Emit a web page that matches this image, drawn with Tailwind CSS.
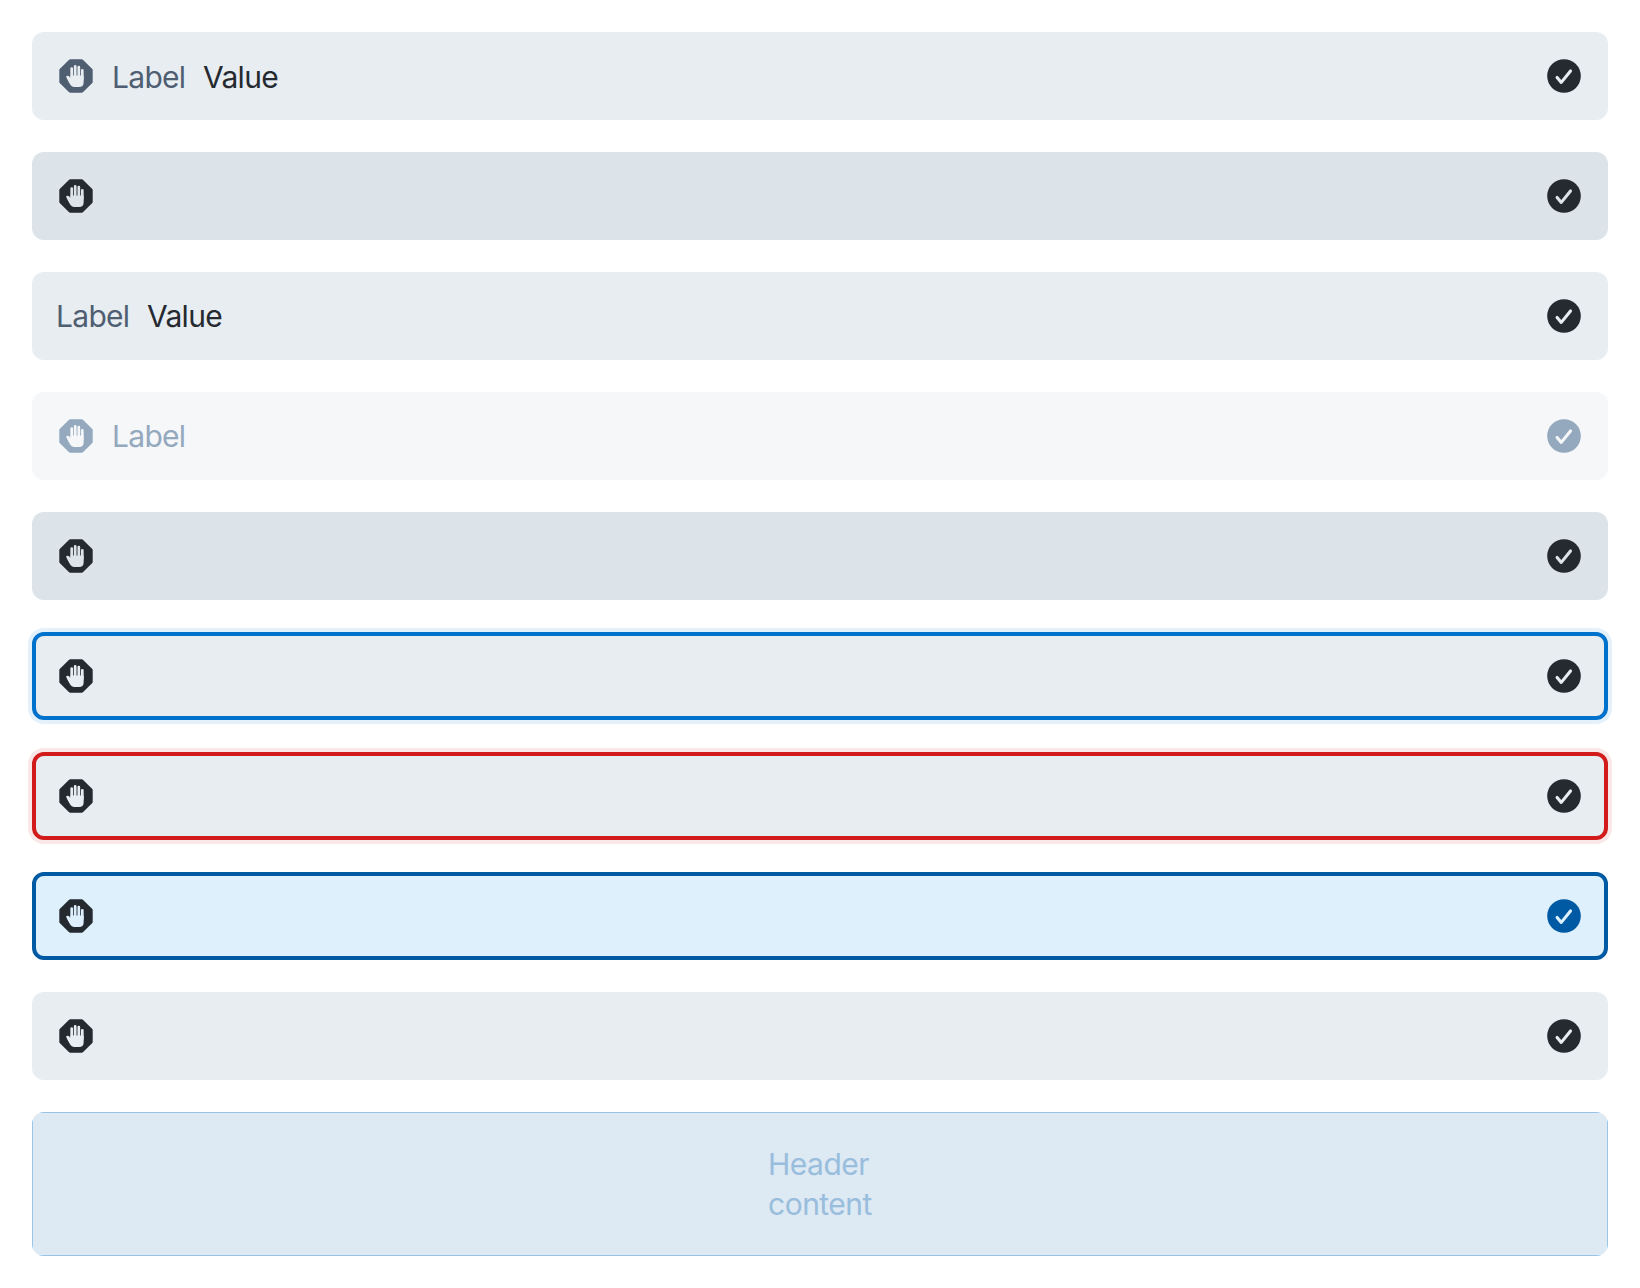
<!DOCTYPE html>
<html lang="en">
<head>
<meta charset="utf-8">
<title>Input states</title>
<script src="https://cdn.jsdelivr.net/npm/@tailwindcss/browser@4"></script>
</head>
<body class="bg-white font-['Inter',sans-serif] text-[30px] leading-10">
<svg class="hidden">
  <symbol id="hand" viewBox="0 0 34 34">
    <path fill="currentColor" d="M11.1 .3h11.8q.6 0 1 .4l9.4 9.4q.4 .4 .4 1v11.8q0 .6-.4 1l-9.4 9.4q-.4 .4-1 .4H11.1q-.6 0-1-.4L.7 23.9q-.4-.4-.4-1V11.1q0-.6 .4-1L10.100 .7q.4-.4 1-.4z"/>
    <g class="fill-(--bg) stroke-(--bg)" stroke-linecap="round">
      <path stroke-width="2.7" fill="none" d="M12.700 9.6V19M16.200 7.400V18M19.800 8V18M23.300 11.300V20"/>
      <path stroke="none" d="M7.200 18c0-1.700 2.300-1.500 3.100-.4l1.100 1.600V16.500H24.650V23.500c0 3.200-1.700 4.600-4.700 4.600h-3.500c-2.400 0-4-.7-5.200-2.600C9.500 22.800 8.200 20.200 7.200 18z"/>
    </g>
  </symbol>
  <symbol id="check" viewBox="0 0 34 34">
    <circle cx="17" cy="17" r="16.800" fill="currentColor"/>
    <path class="stroke-(--bg)" d="M10.100 18.400L14.300 23.400L23.500 12" fill="none" stroke-width="3.100" stroke-linecap="round" stroke-linejoin="round"/>
  </symbol>
</svg>
<main class="flex flex-col gap-8 p-8">
  <div class="flex h-22 items-center rounded-xl bg-[#e8edf1] px-[27px] pb-px text-[#252a31] [--bg:#e8edf1]">
    <svg class="size-[34px] text-[#4f5e71]"><use href="#hand"/></svg>
    <span class="ml-[19px] mt-[3px] w-[91px] tracking-[-0.7px] text-[#4f5e71]">Label</span>
    <span class="mt-[3px] tracking-[-0.7px]">Value</span>
    <svg class="ml-auto size-[34px]"><use href="#check"/></svg>
  </div>
  <div class="flex h-22 items-center justify-between rounded-xl bg-[#dce3e9] px-[27px] pb-px text-[#252a31] [--bg:#dce3e9]">
    <svg class="size-[34px]"><use href="#hand"/></svg>
    <svg class="size-[34px]"><use href="#check"/></svg>
  </div>
  <div class="flex h-22 items-center rounded-xl bg-[#e8edf1] pr-[27px] pl-6 pb-px text-[#252a31] [--bg:#e8edf1]">
    <span class="mt-px w-[91px] tracking-[-0.7px] text-[#4f5e71]">Label</span>
    <span class="mt-px tracking-[-0.7px]">Value</span>
    <svg class="ml-auto size-[34px]"><use href="#check"/></svg>
  </div>
  <div class="flex h-22 items-center rounded-xl bg-[#f5f7f9] px-[27px] pb-px text-[#94a8be] [--bg:#f5f7f9]">
    <svg class="size-[34px]"><use href="#hand"/></svg>
    <span class="ml-[19px] mt-px tracking-[-0.7px]">Label</span>
    <svg class="ml-auto size-[34px]"><use href="#check"/></svg>
  </div>
  <div class="flex h-22 items-center justify-between rounded-xl bg-[#dce3e9] px-[27px] pb-px text-[#252a31] [--bg:#dce3e9]">
    <svg class="size-[34px]"><use href="#hand"/></svg>
    <svg class="size-[34px]"><use href="#check"/></svg>
  </div>
  <div class="flex h-22 items-center justify-between rounded-xl border-4 border-[#0172cb] bg-[#e8edf1] px-[23px] pb-px text-[#252a31] ring-4 ring-[#0172cb]/10 [--bg:#e8edf1]">
    <svg class="size-[34px]"><use href="#hand"/></svg>
    <svg class="size-[34px]"><use href="#check"/></svg>
  </div>
  <div class="flex h-22 items-center justify-between rounded-xl border-4 border-[#d21c1c] bg-[#e8edf1] px-[23px] pb-px text-[#252a31] ring-4 ring-[#d21c1c]/10 [--bg:#e8edf1]">
    <svg class="size-[34px]"><use href="#hand"/></svg>
    <svg class="size-[34px]"><use href="#check"/></svg>
  </div>
  <div class="flex h-22 items-center justify-between rounded-xl border-4 border-[#005aa3] bg-[#def0fc] px-[23px] pb-px text-[#252a31] [--bg:#def0fc]">
    <svg class="size-[34px]"><use href="#hand"/></svg>
    <svg class="size-[34px] text-[#005aa3]"><use href="#check"/></svg>
  </div>
  <div class="flex h-22 items-center justify-between rounded-xl bg-[#e8edf1] px-[27px] pb-px text-[#252a31] [--bg:#e8edf1]">
    <svg class="size-[34px]"><use href="#hand"/></svg>
    <svg class="size-[34px]"><use href="#check"/></svg>
  </div>
  <div class="h-36 overflow-hidden rounded-xl">
    <div class="flex h-full items-center justify-center border border-[#99c4e6] bg-[#dde9f3] text-[#99bddc]">
      <div class="w-[104px] tracking-[-0.5px]">Header<br>content</div>
    </div>
  </div>
</main>
</body>
</html>
